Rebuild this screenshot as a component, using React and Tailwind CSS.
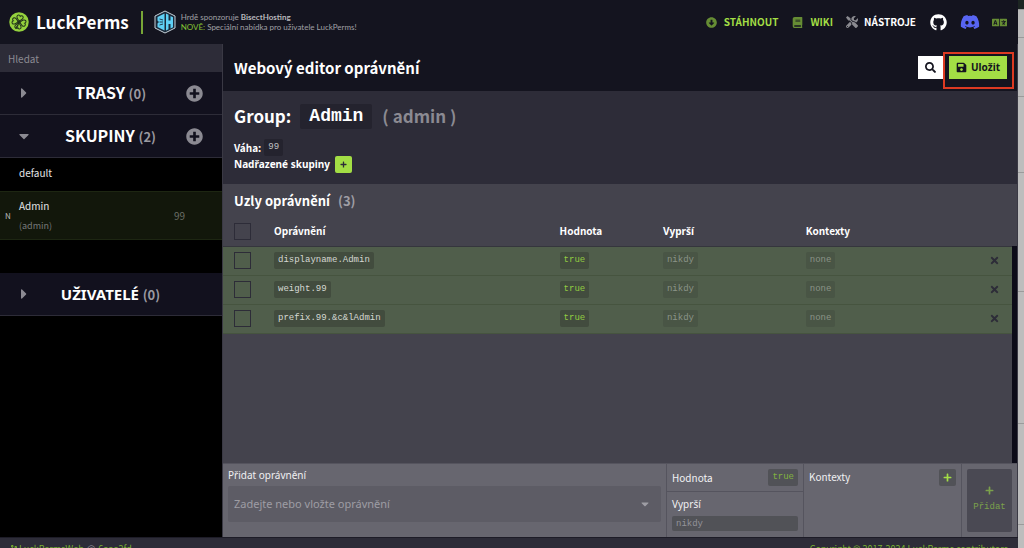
import React, { useState } from 'react'
import {
  FaArrowAltCircleDown,
  FaBook,
  FaCaretDown,
  FaCaretRight,
  FaCodeBranch,
  FaDiscord,
  FaGithub,
  FaLanguage,
  FaPlus,
  FaPlusCircle,
  FaSave,
  FaSearch,
  FaTimes,
  FaTools,
} from 'react-icons/fa'

const NODES = ['displayname.Admin', 'weight.99', 'prefix.99.&c&lAdmin']

function Logo() {
  return (
    <svg viewBox="0 0 40 40" className="size-5 shrink-0" aria-hidden="true">
      <circle cx="20" cy="20" r="19.5" fill="#94d13d" />
      <g fill="none" stroke="#20301b" strokeWidth="2">
        {[0, 90, 180, 270].map(a => (
          <path
            key={a}
            transform={`rotate(${a + 12} 20 20)`}
            d="M20 18C15 14 12 10.500 14.500 7.500c2-2 4.500-1 5.500 1 1-2 3.500-3 5.500-1 2.500 3 -.5 6.500-5.500 10.500z"
          />
        ))}
      </g>
      <path d="M20 20c-1 5-3 9-7 13" stroke="#20301b" strokeWidth="2.500" fill="none" />
      <circle cx="20" cy="20" r="3" fill="#20301b" />
    </svg>
  )
}

function SponsorLogo() {
  return (
    <svg viewBox="0 0 44 46" className="h-6 w-[22px] shrink-0" aria-hidden="true">
      <path d="M22 1 42 11v24L22 45 2 35V11z" fill="#1b2a3a" stroke="#dbe6ee" strokeWidth="1.800" />
      <path d="M21 6v34L7 33v-7l3-3-3-3v-7z" fill="#5fd0f5" />
      <path d="M11 17l7 2M11 23h7M11 29l7-2" stroke="#1b2a3a" strokeWidth="1.800" />
      <path d="M24 6l5 2.500V20h4v-9l5 2.500v20L33 36v-9h-4v10.500L24 40z" fill="#5fd0f5" />
    </svg>
  )
}

function Header() {
  return (
    <header className="flex h-11 shrink-0 items-center bg-[#14141f] pr-[11px] pl-[9px]">
      <Logo />
      <a href="#home" className="ml-[7px] text-[17px] leading-6 font-bold text-white">LuckPerms</a>
      <span className="mr-[11px] ml-[12px] h-[23px] w-0.5 bg-[#78a637]" />
      <SponsorLogo />
      <p className="ml-[5px] text-[8px] leading-[10px] text-[#a0a0a5] [font-family:Lato,sans-serif]">
        Hrdě sponzoruje <b className="text-[#b8b8bc]">BisectHosting</b>
        <br />
        <span className="text-[#85c234]">NOVĚ:</span> Speciální nabídka pro uživatele LuckPerms!
      </p>
      <nav className="ml-auto flex items-center text-[10px] leading-4 font-bold text-[#a3de45]">
        <a href="#download" className="flex items-center gap-[7px]">
          <FaArrowAltCircleDown className="size-[11px] text-[#668d34]" />
          STÁHNOUT
        </a>
        <a href="#wiki" className="ml-[14px] flex items-center gap-[7px]">
          <FaBook className="size-[11px] text-[#668d34]" />
          WIKI
        </a>
        <a href="#tools" className="ml-[13px] flex items-center gap-[6px] text-white">
          <FaTools className="size-3 text-[#8a8a90]" />
          NÁSTROJE
        </a>
        <a href="#github" aria-label="GitHub" className="ml-[14px] text-white">
          <FaGithub className="size-[17px]" />
        </a>
        <a href="#discord" aria-label="Discord" className="ml-[13px] text-[#5865f2]">
          <FaDiscord className="size-5" />
        </a>
        <button type="button" aria-label="Jazyk" className="ml-3 text-[#668d34]">
          <FaLanguage className="size-[15px]" />
        </button>
      </nav>
    </header>
  )
}

function SideSection({ title, count, open, canAdd, titleClass = '' }) {
  return (
    <div className="flex h-[43px] items-center border-b border-[#2d2c38] bg-[#12111e] pr-[19px] pl-4 text-[#8b8a92]">
      <button type="button" aria-label={`Rozbalit ${title}`} className="mr-[3px] w-4">
        {open ? <FaCaretDown className="size-4" /> : <FaCaretRight className="size-4" />}
      </button>
      <h2 className="flex-1 text-center text-[16px] leading-6 font-bold text-white">
        <span className={titleClass}>{title}</span> <span className="text-[13px] text-[#9a99a0]">({count})</span>
      </h2>
      {canAdd ? (
        <button type="button" aria-label={`Přidat ${title}`}>
          <FaPlusCircle className="size-[17px]" />
        </button>
      ) : (
        <span className="w-[17px]" />
      )}
    </div>
  )
}

function Sidebar() {
  return (
    <aside className="flex w-[222px] shrink-0 flex-col bg-black">
      <input
        type="text"
        aria-label="Hledat"
        placeholder="Hledat"
        className="h-7 bg-[#2d2c38] px-2 text-[10px] text-white outline-none placeholder:text-[#8b8a92]"
      />
      <SideSection title="TRASY" count={0} canAdd />
      <SideSection title="SKUPINY" count={2} open canAdd />
      <ul className="mb-[33px] text-[10px] leading-4 text-[#e4e4e6]">
        <li className="flex h-[33px] items-center pl-[19px]">
          <span className="pb-1">default</span>
        </li>
        <li className="flex h-[49px] items-center border-y border-[#1d2612] bg-[#12170b]">
          <span className="flex w-[19px] justify-center pr-[3px] text-[8px] text-[#b9b9b9]">N</span>
          <div>
            <p>Admin</p>
            <p className="mt-1 text-[9px] text-[#77797a]">(admin)</p>
          </div>
          <span className="mr-[37px] ml-auto text-[#6a6e66]">99</span>
        </li>
      </ul>
      <SideSection title="UŽIVATELÉ" count={0} titleClass="text-[15px] [font-family:'Noto_Sans',sans-serif]" />
    </aside>
  )
}

function Code({ children, className = 'bg-[#424c3e] text-[#d5d8d3]' }) {
  return (
    <code
      className={`block h-[17px] w-fit rounded-xs px-1 text-[9px] leading-[17px] [font-family:'Liberation_Mono',monospace] ${className}`}
    >
      {children}
    </code>
  )
}

function Checkbox({ label }) {
  return (
    <input
      type="checkbox"
      aria-label={label}
      className="ml-[11px] block size-[17px] appearance-none border border-[#2d2c38] checked:bg-[#a3de45]"
    />
  )
}

function NodeTable() {
  return (
    <table className="w-full table-fixed border-collapse text-left text-[10px] leading-4">
      <colgroup>
        <col className="w-[51px]" />
        <col className="w-[36.200%]" />
        <col className="w-[13.100%]" />
        <col className="w-[18.100%]" />
        <col />
        <col className="w-9" />
      </colgroup>
      <thead>
        <tr className="h-[29px] border-b border-[#35363d] text-white">
          <th><Checkbox label="Vybrat vše" /></th>
          <th>Oprávnění</th>
          <th>Hodnota</th>
          <th className="[font-family:'Noto_Sans',sans-serif]">Vyprší</th>
          <th>Kontexty</th>
          <th aria-label="Smazat" />
        </tr>
      </thead>
      <tbody>
        {NODES.map(node => (
          <tr key={node} className="h-[29px] border-b border-[#46543f] bg-[#505e4b]">
            <td><Checkbox label={node} /></td>
            <td><Code>{node}</Code></td>
            <td><Code className="bg-[#424c3e] text-[#92cb42]">true</Code></td>
            <td><Code className="bg-[#495545] text-[#8b9488]">nikdy</Code></td>
            <td><Code className="bg-[#495545] text-[#8b9488]">none</Code></td>
            <td>
              <button type="button" aria-label={`Smazat ${node}`} className="ml-[13px] block text-[#2d2c38]">
                <FaTimes className="size-[11px]" />
              </button>
            </td>
          </tr>
        ))}
      </tbody>
    </table>
  )
}

function AddNode() {
  const [value, setValue] = useState('')

  return (
    <form className="flex h-[74px] shrink-0 border-t border-[#55545e] bg-[#67666f] text-[10px] leading-4 text-[#f0f0f2]">
      <div className="flex-1 px-[5px] pt-[3px]">
        <label htmlFor="permission" className="block [font-family:'Noto_Sans',sans-serif]">Přidat oprávnění</label>
        <div className="mt-[3px] flex h-9 items-center rounded-xs bg-[#5d5c65] px-[6px] text-[#9e9da4]">
          <input
            id="permission"
            value={value}
            onChange={e => setValue(e.target.value)}
            placeholder="Zadejte nebo vložte oprávnění"
            className="min-w-0 flex-1 text-[11px] text-white [font-family:'Noto_Sans',sans-serif] outline-none placeholder:text-[#9e9da4]"
          />
          <FaCaretDown className="mr-1 size-3" />
        </div>
      </div>
      <div className="flex w-[138px] flex-col border-x border-[#55545e]">
        <div className="flex h-7 items-center justify-between border-b border-[#55545e] px-[5px]">
          <span>Hodnota</span>
          <button type="button">
            <Code className="bg-[#515257] text-[#82b23f]">true</Code>
          </button>
        </div>
        <div className="flex flex-col gap-1 px-[5px] pt-1">
          <label htmlFor="expiry" className="[font-family:'Noto_Sans',sans-serif]">Vyprší</label>
          <input
            id="expiry"
            placeholder="nikdy"
            className="h-[15px] w-full rounded-xs bg-[#515257] px-1 text-[9px] [font-family:'Liberation_Mono',monospace] outline-none placeholder:text-[#93939a]"
          />
        </div>
      </div>
      <div className="flex w-[158px] items-start justify-between border-r border-[#55545e] px-[5px] pt-[5px]">
        <span>Kontexty</span>
        <button type="button" aria-label="Přidat kontext" className="flex size-[17px] items-center justify-center rounded-xs bg-[#515257] text-[#a3de45]">
          <FaPlus className="size-[9px]" />
        </button>
      </div>
      <button
        type="button"
        className="m-[5px] flex w-[45px] flex-col items-center justify-center gap-1 rounded-xs bg-[#4a4953] text-[9px] text-[#7ba14b] [font-family:'Liberation_Mono',monospace]"
      >
        <FaPlus className="size-[9px]" />
        Přidat
      </button>
    </form>
  )
}

function Editor() {
  return (
    <main className="flex min-w-0 flex-1 flex-col border-x border-[#3a3944] bg-[#44434d]">
      <div className="flex h-12 shrink-0 items-center border-b border-[#2d2c38] bg-[#14141f] pr-[10px] pl-[11px]">
        <h1 className="flex-1 text-[15px] leading-6 font-bold text-white">Webový editor oprávnění</h1>
        <button type="button" aria-label="Hledat oprávnění" className="flex h-[23px] w-[25px] items-center justify-center bg-white text-[#14141f]">
          <FaSearch className="size-[11px]" />
        </button>
        <div className="relative ml-[6px]">
          <button type="button" className="flex h-[23px] items-center gap-1 bg-[#a3de45] px-[7px] text-[10px] font-bold text-[#14141f] [font-family:'Noto_Sans',sans-serif]">
            <FaSave className="size-[11px]" />
            Uložit
          </button>
          <span className="pointer-events-none absolute -top-1 -right-[7px] -bottom-[10px] -left-[6px] border-2 border-[#dc3a22]" />
        </div>
      </div>

      <section className="h-[92px] shrink-0 bg-[#2d2c38] pt-[10px] pl-[11px] text-[10px] leading-[17px] font-bold text-white">
        <h2 className="flex h-7 items-center text-[17px] leading-6">
          Group:
          <code className="ml-[9px] h-[25px] rounded-xs bg-[#24232e] px-[9px] text-[18px] leading-[25px] [font-family:'Liberation_Mono',monospace]">Admin</code>
          <span className="ml-[10px] text-[#8b8a92]">( admin )</span>
        </h2>
        <div className="mt-[9px] flex items-center gap-[3px]">
          Váha: <Code className="bg-[#24232e] font-normal text-[#c0c0c4]">99</Code>
        </div>
        <div className="flex items-center gap-[5px]">
          <span className="[font-family:'Noto_Sans',sans-serif]">Nadřazené skupiny</span>
          <button type="button" aria-label="Přidat nadřazenou skupinu" className="flex size-[17px] items-center justify-center rounded-xs bg-[#a3de45] text-[#2d2c38]">
            <FaPlus className="size-[7px]" />
          </button>
        </div>
      </section>

      <section className="flex min-h-0 flex-1 flex-col">
        <h2 className="flex h-[33px] shrink-0 items-center gap-2 pl-[11px] text-[13px] leading-5 font-bold text-white">
          Uzly oprávnění <span className="text-[#9e9da4]">(3)</span>
        </h2>
        <div className="flex min-h-0 flex-1">
          <div className="min-w-0 flex-1">
            <NodeTable />
          </div>
          <div className="mt-[29px] w-[5px] bg-[#0c0b18]" />
        </div>
      </section>
      <AddNode />
    </main>
  )
}

function Footer() {
  return (
    <footer className="flex justify-between border-t border-[#1d1c27] bg-[#2d2c38] px-[10px] pt-[3px] text-[9px] leading-4 text-[#78b02f]">
      <p className="flex items-center">
        <FaCodeBranch className="mr-px size-2" />
        <a href="#repo">LuckPermsWeb</a>
        <span className="mx-[3px] text-[#a0a0a6]">@</span>
        <a href="#commit">6aaa2fd</a>
      </p>
      <p>Copyright © 2017-2024 LuckPerms contributors</p>
    </footer>
  )
}

// Sliver of the page behind the editor window
function Backdrop() {
  return (
    <div className="flex w-[6px] shrink-0 flex-col divide-y divide-[#9b9b9b] bg-[#bdbdbd]">
      <div className="h-[10px] bg-[#1c2522]" />
      <div className="h-7" />
      <div className="h-[59px]" />
      <div className="h-[76px]" />
      <div className="h-[119px]" />
      <div className="h-[132px]" />
      <div className="h-[101px]" />
      <div className="flex-1" />
    </div>
  )
}

export default function App() {
  return (
    <div className="flex h-screen overflow-hidden bg-[#2d2c38] [font-family:'Noto_Sans_CJK_SC','Noto_Sans',sans-serif]">
      <div className="min-w-0 flex-1">
        <div className="flex h-[calc(100vh-11px)] flex-col">
          <Header />
          <div className="flex min-h-0 flex-1">
            <Sidebar />
            <Editor />
          </div>
        </div>
        <Footer />
      </div>
      <Backdrop />
    </div>
  )
}
